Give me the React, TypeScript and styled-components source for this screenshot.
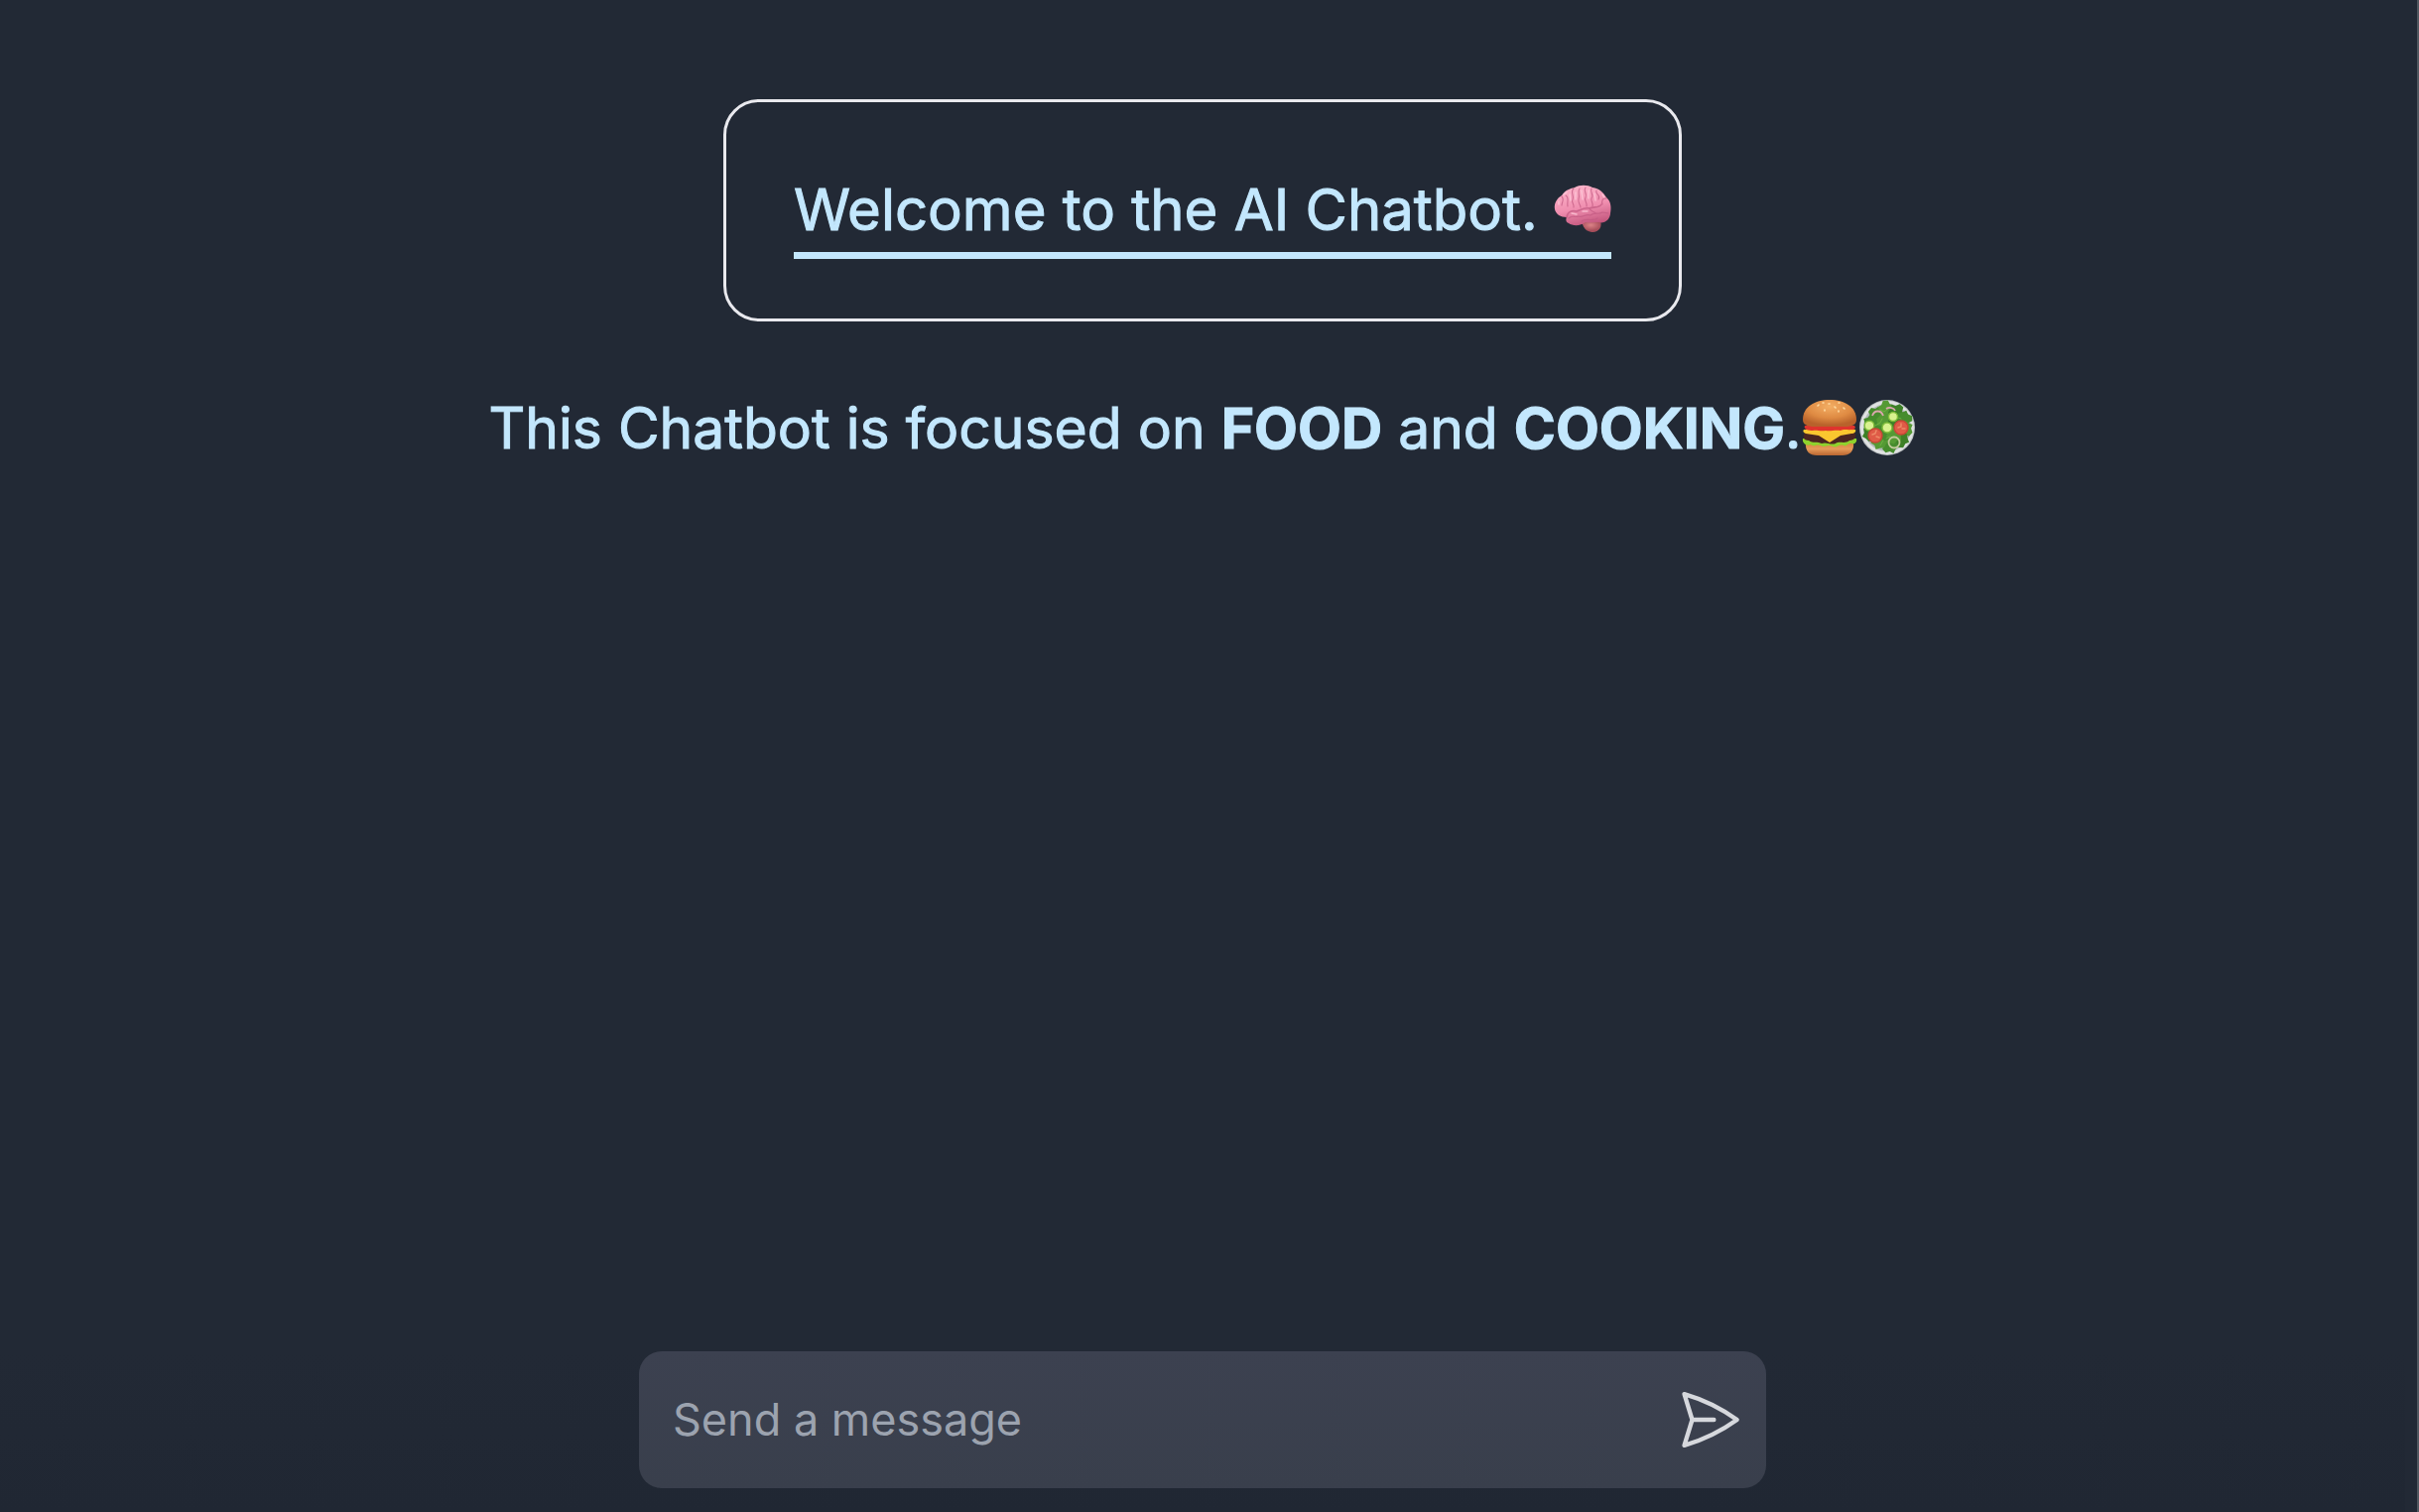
import React, { useState } from "react";
import styled, { createGlobalStyle } from "styled-components";

const GlobalStyle = createGlobalStyle`
  *, *::before, *::after { box-sizing: border-box; }
  body {
    margin: 0;
    background: #222935;
    font-family: Inter, "Noto Sans", sans-serif;
  }
`;

const Page = styled.div`
  min-height: 100vh;
  display: flex;
  flex-direction: column;
  align-items: center;
  padding: 100px 12px 0 0;
  border-right: 2px solid #50575f;
  color: #c3e7fd;
`;

const Intro = styled.main`
  flex: 1;
  display: flex;
  flex-direction: column;
  align-items: center;
  gap: 64px;
`;

const WelcomeCard = styled.section`
  padding: 68px 68px 60px;
  border: 3px solid #e9e9ee;
  border-radius: 36px;
`;

const Title = styled.h1`
  margin: 0;
  padding-bottom: 3px;
  border-bottom: 7px solid #c3e7fd;
  font-size: 58px;
  font-weight: 400;
  line-height: 80px;
  -webkit-text-stroke: 1px currentColor;
`;

const Tagline = styled.p`
  margin: 0;
  font-size: 57px;
  line-height: 88px;
  -webkit-text-stroke: 1px currentColor;
`;

const Emoji = styled.svg`
  width: 58px;
  height: 58px;
  vertical-align: -8px;
`;

const Composer = styled.form`
  width: 100%;
  display: flex;
  justify-content: center;
  padding-bottom: 24px;
  background: linear-gradient(#222935, #202733);
`;

const Field = styled.div`
  width: 100%;
  max-width: 1136px;
  height: 138px;
  display: flex;
  align-items: center;
  padding: 0 22px 0 34px;
  border-radius: 23px;
  background: linear-gradient(#3c4150, #393f4c);
`;

const MessageInput = styled.input`
  flex: 1;
  min-width: 0;
  padding: 0;
  border: 0;
  outline: 0;
  background: transparent;
  color: #e5e7eb;
  font: inherit;
  font-size: 45px;
  line-height: 68px;
  &::placeholder { color: #9ca3af; opacity: 1; }
`;

const SendButton = styled.button`
  display: flex;
  padding: 0;
  border: 0;
  background: none;
  color: #d6d8dd;
  cursor: pointer;
`;

const Brain = () => (
  <Emoji viewBox="0 0 58 58" role="img" aria-label="brain">
    <defs>
      <linearGradient id="brainFill" x1="0.3" y1="0" x2="0.6" y2="1">
        <stop offset="0" stopColor="#fdb6cb" />
        <stop offset="0.55" stopColor="#f08fb0" />
        <stop offset="1" stopColor="#c2557c" />
      </linearGradient>
      <radialGradient id="brainStem" cx="0.5" cy="0.35">
        <stop offset="0" stopColor="#dc8387" />
        <stop offset="1" stopColor="#a84e5b" />
      </radialGradient>
    </defs>
    <path d="M27 42C30 43 29 51 39 52C46 52 49 46 47 41Z" fill="url(#brainStem)" />
    <path d="M1 29C0 23 3 18 8 15C12 9 17 8 21 7C26 4 34 4 39 7C46 8 50 12 53 17C58 21 58 28 57 33C57 39 51 44 45 42C39 42 35 43 32 42C27 46 19 46 15 43C12 42 12 39 13 37C7 37 2 34 1 29Z" fill="url(#brainFill)" />
    <g fill="none" stroke="#c35b83" strokeWidth="1.1" strokeLinecap="round" strokeLinejoin="round" opacity="0.75">
      <path d="M13 37C14 31 18 30 23 31C28 29 31 27 36 28C40 26 46 28 48 24" strokeWidth="1.6" />
      <path d="M15 38C19 34 21 38 25 36C29 38 32 33 37 35C41 31 45 35 49 32L55 33" />
      <path d="M8 16C11 19 8 22 8 25M12 15C16 17 13 22 14 26" />
      <path d="M20 8C16 12 21 15 19 19C17 22 21 24 20 27M26 8C23 12 27 14 25 19C24 23 27 24 27 27" />
      <path d="M32 7C29 11 34 12 32 17C30 20 34 22 33 26M38 8C36 12 41 14 38 18C37 21 40 22 39 26" />
      <path d="M43 10C41 14 48 14 45 19M53 18C49 17 48 21 49 24M36 28C37 32 40 30 42 33M28 41C33 37 38 42 44 38" />
    </g>
    <g fill="none" stroke="#ffd0de" strokeWidth="1.4" strokeLinecap="round" opacity="0.7">
      <path d="M10 14L13 12M16 14L17 20M22 12L22 19M28 10L29 19M35 10L35 18M41 13L42 20M49 14L51 17M18 33L23 34M29 31L34 31M5 21L5 24" />
    </g>
  </Emoji>
);

const Burger = () => (
  <Emoji viewBox="0 0 58 58" role="img" aria-label="hamburger">
    <defs>
      <radialGradient id="bunTop" cx="0.5" cy="0.25" r="0.7">
        <stop offset="0" stopColor="#f3ae64" />
        <stop offset="0.6" stopColor="#df8b43" />
        <stop offset="1" stopColor="#b8622b" />
      </radialGradient>
      <linearGradient id="bunBase" x1="0" y1="0" x2="0" y2="1">
        <stop offset="0" stopColor="#d7843d" />
        <stop offset="0.5" stopColor="#e69a59" />
        <stop offset="1" stopColor="#b96631" />
      </linearGradient>
    </defs>
    <path d="M5 44H53C54 53 49 57 42 57H16C9 57 4 53 5 44Z" fill="url(#bunBase)" />
    <path d="M2 40H56C57 44 54 46 51 45C48 44 46 49 43 47C39 45 36 50 32 48C27 45 24 50 20 47C16 45 13 49 10 46C6 48 1 45 2 40Z" fill="#8fd22d" />
    <path d="M4 34H54C57 38 54 42 49 42C44 46 39 42 35 45C30 47 26 43 21 45C17 43 12 45 8 42C2 42 2 38 4 34Z" fill="#4b2520" />
    <path d="M3 31H55C56 33 54 35 51 35L40 37L29 44L18 37L5 35C2 34 2 32 3 31Z" fill="#fbc72f" />
    <path d="M4 27H54C56 29 54 32 51 31C47 32 44 30 40 32C34 31 30 33 25 32C19 33 16 31 12 32C8 32 2 31 4 27Z" fill="#df342d" />
    <path d="M2 21C2 8 14 1 29 1C44 1 56 8 56 21C56 26 52 27 47 28H11C6 27 2 26 2 21Z" fill="url(#bunTop)" />
    <g stroke="#ffdca3" strokeWidth="1.6" strokeLinecap="round">
      <path d="M17 7L18 6M24 11V12M28 5H29M34 8L35 9M38 12V13M43 9L44 10M22 4H23M38 4H39" />
    </g>
  </Emoji>
);

const leaves = [
  [18, 16], [28, 10], [38, 13], [46, 20], [47, 30], [43, 41], [32, 47], [21, 43], [12, 35], [13, 24], [26, 22], [35, 28], [25, 34], [36, 37],
];

const Salad = () => (
  <Emoji viewBox="0 0 58 58" role="img" aria-label="green salad">
    <circle cx="29" cy="29" r="28" fill="#b9bec0" />
    <circle cx="29" cy="29" r="27" fill="#e0e2e2" />
    <circle cx="29" cy="29" r="24" fill="#b4babc" />
    {leaves.map(([x, y], i) => (
      <path
        key={i}
        transform={`translate(${x} ${y}) rotate(${i * 47})`}
        d="M-8 -3L-5 -7L-1 -6L2 -8L5 -5L8 -3L7 1L9 4L4 6L1 8L-3 6L-7 5L-6 1Z"
        fill={["#468c2d", "#559a34", "#3d8026"][i % 3]}
      />
    ))}
    <g fill="none" stroke="#6fb043" strokeWidth="1" strokeLinecap="round">
      <path d="M22 11L26 13L30 10M35 22L40 19L43 20M17 27L22 24L24 20M28 40L32 38M22 47L25 42" />
    </g>
    <g fill="none" stroke="#dba7ad" strokeWidth="1.8">
      <path d="M14 17C16 11 23 11 25 17M28 10C31 8 36 9 37 12" />
      <circle cx="36" cy="44" r="5.5" stroke="#c4cb9c" />
    </g>
    <g fill="#d9f28f" stroke="#80bd3b" strokeWidth="1.4">
      <circle cx="11" cy="27" r="4.8" />
      <circle cx="29" cy="29" r="5" />
      <circle cx="35" cy="18" r="4.5" />
    </g>
    <g fill="#df5b47" stroke="#c84636" strokeWidth="1.4">
      <circle cx="17" cy="37" r="7" />
      <circle cx="43" cy="29" r="7" />
    </g>
    <path d="M14 36L17 35L18 32M18 38L21 39M40 29L43 28V25M44 30L47 30" stroke="#ee8c68" strokeWidth="1.4" strokeLinecap="round" fill="none" />
  </Emoji>
);

const SendIcon = () => (
  <svg width="70" height="70" viewBox="0 0 24 24" fill="none" stroke="currentColor" strokeWidth="1.5" strokeLinecap="round" strokeLinejoin="round" aria-hidden="true">
    <path d="M6 12 3.269 3.125A59.769 59.769 0 0 1 21.485 12 59.768 59.768 0 0 1 3.27 20.875L5.999 12Zm0 0h7.5" />
  </svg>
);

export default function App() {
  const [message, setMessage] = useState("");

  return (
    <>
      <GlobalStyle />
      <Page>
        <Intro>
          <WelcomeCard>
            <Title>
              Welcome to the AI Chatbot. <Brain />
            </Title>
          </WelcomeCard>
          <Tagline>
            This Chatbot is focused on <strong>FOOD</strong> and <strong>COOKING</strong>.<Burger />
            <Salad />
          </Tagline>
        </Intro>
        <Composer onSubmit={(event) => event.preventDefault()}>
          <Field>
            <MessageInput
              type="text"
              aria-label="Send a message"
              placeholder="Send a message"
              autoComplete="off"
              value={message}
              onChange={(event) => setMessage(event.target.value)}
            />
            <SendButton type="submit" aria-label="Send">
              <SendIcon />
            </SendButton>
          </Field>
        </Composer>
      </Page>
    </>
  );
}
